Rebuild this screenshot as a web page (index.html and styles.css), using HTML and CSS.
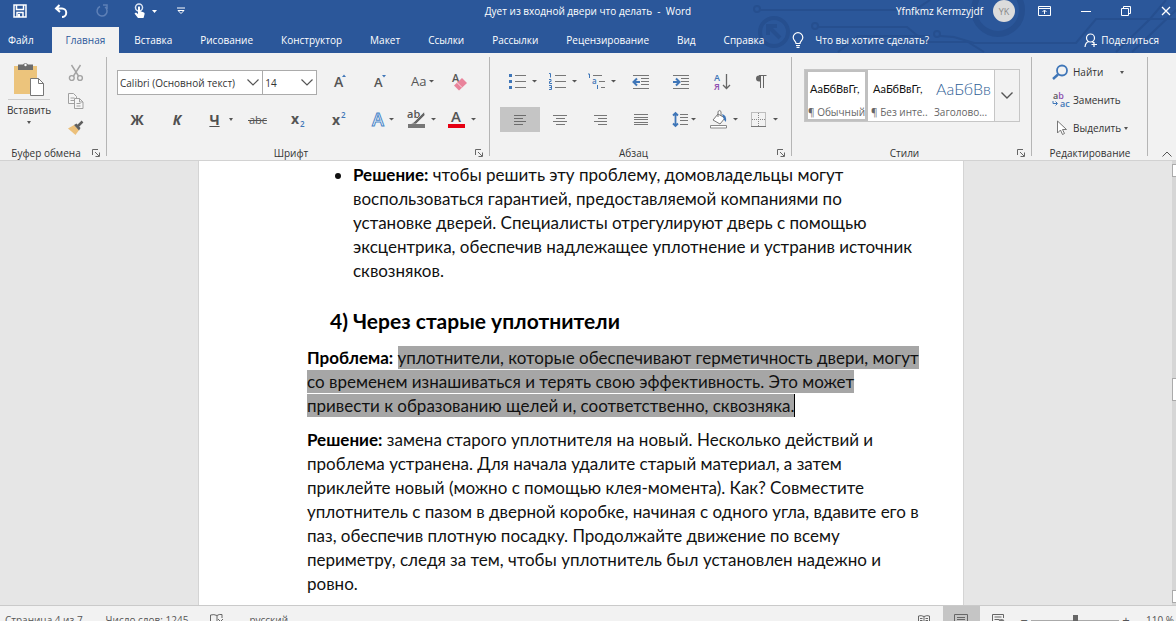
FILE: index.html
```html
<!DOCTYPE html>
<html lang="ru">
<head>
<meta charset="utf-8">
<title>Дует из входной двери что делать - Word</title>
<link rel="stylesheet" href="styles.css">
</head>
<body>
<div class="app">
  <header class="header">
    <svg class="circuit" width="430" height="53" viewBox="746 0 430 53" fill="none" aria-hidden="true">
      <g stroke="#264f8f" stroke-width="2">
        <circle cx="757" cy="9" r="3"/><path d="M760 10H915L930 0"/>
        <circle cx="774" cy="32" r="14" stroke-width="4"/><path d="M780 38l-11-11M768 35v-9h9" stroke-width="4"/>
        <circle cx="815" cy="26" r="3"/><path d="M818 27H907L925 42H968L984 52"/>
        <path d="M838 52L858 36H930"/><circle cx="937" cy="34" r="3"/><path d="M940 36l14 1 20 6H1076L1096 19H1176M1116 52L1150 19 1166 0M1132 52L1176 10"/>
        <circle cx="998" cy="10" r="24" stroke-width="6"/>
      </g>
    </svg>
    <div class="titlebar">
      <div class="quick">
        <button class="qb" aria-label="Сохранить"><svg width="14" height="14" viewBox="0 0 14 14"><path d="M1 1h12v12H1zM3.500 1v4.500h7V1M4 13V8.500h6V13" fill="none" stroke="#fff" stroke-width="1.500"/><path d="M5 10h2v3H5z" fill="#fff"/></svg></button>
        <button class="qb" aria-label="Отменить"><svg width="14" height="14" viewBox="0 0 14 14"><path d="M5.500 1L2 4.500 6 8M2.500 4.500H8a4 4 0 0 1 0 8.500" fill="none" stroke="#fff" stroke-width="2"/></svg></button>
        <button class="qb" aria-label="Повторить"><svg width="14" height="14" viewBox="0 0 14 14"><path d="M5 2.500A5 5 0 1 0 10 3M8 1h4v4" fill="none" stroke="#5e80b7" stroke-width="1.500"/></svg></button>
        <button class="qb touch" aria-label="Режим сенсорного управления"><svg width="26" height="16" viewBox="0 0 26 16"><circle cx="6" cy="4.500" r="3.500" fill="none" stroke="#dce5f3" stroke-width="1.500"/><path d="M5 4q1-1.500 2 0v4l4 1.500q1 .5.500 2L10.500 15H5L1.500 10.500 3 9.500 5 11z" fill="#fff"/><path d="M19 7h5l-2.500 3z" fill="#fff"/></svg></button>
        <button class="qb" aria-label="Настройка панели"><svg width="8" height="8" viewBox="0 0 8 8"><path d="M0 1h8M1 3.500h6L4 6.500z" fill="none" stroke="#fff"/></svg></button>
      </div>
      <h1 class="title">Дует из входной двери что делать&nbsp; -&nbsp; Word</h1>
      <div class="window">
        <span class="user">Yfnfkmz Kermzyjdf</span>
        <button class="avatar">YK</button>
        <button class="wb" aria-label="Параметры ленты"><svg width="13" height="10" viewBox="0 0 13 10"><path d="M.5.500h12v9H.5zM1 2.500h11M6.500 8V4.500M4.500 6l2-2 2 2" fill="none" stroke="#fff"/></svg></button>
        <button class="wb" aria-label="Свернуть"><svg width="10" height="10" viewBox="0 0 10 10"><path d="M0 5.500h10" stroke="#fff"/></svg></button>
        <button class="wb" aria-label="Восстановить"><svg width="10" height="10" viewBox="0 0 10 10"><path d="M.5 2.500h7v7h-7zM2.500 2.500v-2h7v7h-2" fill="none" stroke="#fff"/></svg></button>
        <button class="wb" aria-label="Закрыть"><svg width="10" height="10" viewBox="0 0 10 10"><path d="M1 1l8 8M9 1L1 9" stroke="#fff" stroke-width="1.300"/></svg></button>
      </div>
    </div>
    <nav class="tabs">
      <button class="tab file">Файл</button>
      <button class="tab active">Главная</button>
      <button class="tab">Вставка</button>
      <button class="tab">Рисование</button>
      <button class="tab">Конструктор</button>
      <button class="tab">Макет</button>
      <button class="tab">Ссылки</button>
      <button class="tab">Рассылки</button>
      <button class="tab">Рецензирование</button>
      <button class="tab">Вид</button>
      <button class="tab">Справка</button>
      <button class="tab tell"><svg width="12" height="16" viewBox="0 0 12 16"><path d="M4 11.500C4 9 1.200 8.500 1.200 5.500a4.800 4.800 0 0 1 9.600 0C10.800 8.500 8 9 8 11.500zM4 13.500h4M4.500 15.300h3" fill="none" stroke="#fff" stroke-width="1.200"/></svg>Что вы хотите сделать?</button>
      <button class="tab share"><svg width="14" height="15" viewBox="0 0 14 15"><circle cx="6.500" cy="5" r="4" fill="none" stroke="#fff" stroke-width="1.200"/><path d="M1 14q.5-5 4-5.500M8 8.500l2 1.500M10 9v5M7.500 11.500H13" fill="none" stroke="#fff" stroke-width="1.200"/></svg>Поделиться</button>
    </nav>
  </header>

  <section class="ribbon" aria-label="Главная">
    <div class="group clipboard">
      <div class="clip-body">
        <button class="paste"><svg width="32" height="35" viewBox="0 0 32 35"><path d="M1 4h23v28H1z" fill="#ecc47c"/><path d="M5 2.500h5a3 3 0 0 1 5 0h5V8H5z" fill="#6d6d6d"/><circle cx="12.500" cy="3" r="1.200" fill="#fff"/><path d="M17.500 16.500h8l5 5v12h-13z" fill="#fff" stroke="#777"/><path d="M25.500 16.500v5h5" fill="none" stroke="#777"/></svg><span class="paste-text">Вставить</span><i class="caret"></i></button>
        <div class="clip-tools">
          <button aria-label="Вырезать"><svg width="16" height="16" viewBox="0 0 16 16" fill="none" stroke="#a3a3a3" stroke-width="1.400"><path d="M3.500 0l7 11M12.500 0l-7 11"/><circle cx="3.800" cy="13" r="2.400"/><circle cx="12" cy="13" r="2.400"/></svg></button>
          <button aria-label="Копировать"><svg width="16" height="16" viewBox="0 0 16 16" fill="#f6f6f6" stroke="#a0a0a0"><path d="M.5.500h5l3 3v7h-8zM2.500 5h4M2.500 7.500h4"/><path d="M6.500 5.500h5l3.500 3.500v6.500H6.500zM11.500 5.500V9H15M8.500 10.500h4M8.500 13h4"/></svg></button>
          <button aria-label="Формат по образцу"><svg width="16" height="14" viewBox="0 0 16 14"><path d="M0 7.500L6 4l5 5-3.500 5z" fill="#ecc07a"/><path d="M6 4l2.500-1.500 4 4.500L11 9.500z" fill="#5f5f5f"/><path d="M10 5l4.500-4.500" stroke="#5f5f5f" stroke-width="2.500"/></svg></button>
        </div>
      </div>
      <div class="group-label"><span>Буфер обмена</span><button class="launch" aria-label="Параметры буфера"><svg width="8" height="8" viewBox="0 0 8 8"><path d="M.5 6V.5H6M3 3l4 4M7.500 3.500v4h-4" fill="none" stroke="#666"/></svg></button></div>
    </div>

    <div class="group font">
      <div class="cells">
        <div class="combos">
          <label class="combo family"><select aria-label="Шрифт"><option>Calibri (Основной текст)</option></select><svg width="12" height="7" viewBox="0 0 12 7"><path d="M.5.500L6 6 11.500.500" fill="none" stroke="#555" stroke-width="1.200"/></svg></label>
          <label class="combo size"><select aria-label="Размер шрифта"><option>14</option></select><svg width="12" height="7" viewBox="0 0 12 7"><path d="M.5.500L6 6 11.500.500" fill="none" stroke="#555" stroke-width="1.200"/></svg></label>
        </div>
        <button class="cell" aria-label="Увеличить размер"><svg width="40" height="25" viewBox="0 0 40 25"><text x="17" y="17" class="g14">A</text><path d="M25 7l2-2.500L29 7z" fill="#3f76b8"/></svg></button>
        <button class="cell" aria-label="Уменьшить размер"><svg width="40" height="25" viewBox="0 0 40 25"><text x="17" y="17" class="g13">A</text><path d="M25 5h4l-2 2.500z" fill="#3f76b8"/></svg></button>
        <button class="cell" aria-label="Регистр"><svg width="40" height="25" viewBox="0 0 40 25"><text x="14" y="16" class="g13 thin">Aa</text><path d="M32 10h5l-2.500 2.500z" fill="#555"/></svg></button>
        <button class="cell" aria-label="Очистить форматирование"><svg width="40" height="25" viewBox="0 0 40 25"><text x="15" y="12" class="g11">A</text><path d="M17 15.500L25 8l5 5-8 7.500z" fill="#e9839b"/><path d="M20 12.500l5 5" stroke="#f8dbe1"/></svg></button>

        <button class="cell glyph bold">Ж</button>
        <button class="cell glyph ital">К</button>
        <button class="cell glyph under"><u>Ч</u><i class="caret"></i></button>
        <button class="cell" aria-label="Зачёркнутый"><svg width="40" height="25" viewBox="0 0 40 25"><text x="12" y="17" class="g11 thin">abc</text><path d="M11 13.500h19" stroke="#555"/></svg></button>
        <button class="cell" aria-label="Подстрочный"><svg width="40" height="25" viewBox="0 0 40 25"><text x="14" y="17" class="g14 heavy">x</text><text x="23" y="20" class="g8 blue">2</text></svg></button>
        <button class="cell" aria-label="Надстрочный"><svg width="40" height="25" viewBox="0 0 40 25"><text x="15" y="18" class="g14 heavy">x</text><text x="24" y="11" class="g8 blue">2</text></svg></button>
        <button class="cell" aria-label="Текстовые эффекты"><svg width="40" height="25" viewBox="0 0 40 25"><text x="15" y="19" class="g18 outline">A</text><path d="M32 11h5l-2.500 2.500z" fill="#555"/></svg></button>
        <button class="cell" aria-label="Цвет выделения"><svg width="40" height="25" viewBox="0 0 40 25"><text x="10" y="11" class="g11">ab</text><path d="M27 5L17 15l-3 2h5l9-9z" fill="#666" stroke="#f2f2f2" stroke-width=".6"/><path d="M11 17h17v4H11z" fill="#777"/><path d="M34 11h5l-2.500 2.500z" fill="#555"/></svg></button>
        <button class="cell" aria-label="Цвет текста"><svg width="40" height="25" viewBox="0 0 40 25"><text x="14" y="15" class="g15">A</text><path d="M11 17h17v4H11z" fill="#e60012"/><path d="M34 11h5l-2.500 2.500z" fill="#555"/></svg></button>
      </div>
      <div class="group-label"><span>Шрифт</span><button class="launch" aria-label="Параметры шрифта"><svg width="8" height="8" viewBox="0 0 8 8"><path d="M.5 6V.5H6M3 3l4 4M7.500 3.500v4h-4" fill="none" stroke="#666"/></svg></button></div>
    </div>

    <div class="group para">
      <div class="cells">
        <button class="cell" aria-label="Маркеры"><svg width="40" height="25" viewBox="0 0 40 25"><path d="M9 4h3v3H9zM9 10h3v3H9zM9 16h3v3H9z" fill="#3f76b8"/><path d="M15 5.500h11M15 11.500h11M15 17.500h11" stroke="#777"/><path d="M32 10h5l-2.500 2.500z" fill="#555"/></svg></button>
        <button class="cell" aria-label="Нумерация"><svg width="40" height="25" viewBox="0 0 40 25"><path d="M9 3.500h1.500v4M9 9.500h2v2H9.500v2H12M9 15.500h2.500v4H9M9.500 17.500h2" fill="none" stroke="#3f76b8"/><path d="M15 5.500h11M15 11.500h11M15 17.500h11" stroke="#777"/><path d="M32 10h5l-2.500 2.500z" fill="#555"/></svg></button>
        <button class="cell" aria-label="Многоуровневый список"><svg width="40" height="25" viewBox="0 0 40 25"><path d="M13 5.500h9M19 11.500h6M21 17.500h4" stroke="#777"/><path d="M13.500 5v0M8 4h1.500v4" fill="none" stroke="#3f76b8"/><text x="12" y="14" class="g8 blue">a</text><path d="M17.500 15v4" stroke="#3f76b8"/><path d="M31 10h5l-2.500 2.500z" fill="#555"/></svg></button>
        <button class="cell" aria-label="Уменьшить отступ"><svg width="40" height="25" viewBox="0 0 40 25"><path d="M13 5.500h16M21 8.500h8M21 11.500h8M21 14.500h8M13 18.500h16" stroke="#777"/><path d="M20 12h-6M17 8.500L13.500 12l3.500 3.500" fill="none" stroke="#3f76b8" stroke-width="2"/></svg></button>
        <button class="cell" aria-label="Увеличить отступ"><svg width="40" height="25" viewBox="0 0 40 25"><path d="M13 5.500h16M21 8.500h8M21 11.500h8M21 14.500h8M13 18.500h16" stroke="#777"/><path d="M13 12h6M16 8.500l3.500 3.500-3.500 3.500" fill="none" stroke="#3f76b8" stroke-width="2"/></svg></button>
        <button class="cell" aria-label="Сортировка"><svg width="40" height="25" viewBox="0 0 40 25"><text x="14" y="11" class="g9 blue">А</text><text x="14" y="20" class="g9 violet">Я</text><path d="M26.500 4v14M23 15l3.500 3.500L30 15" fill="none" stroke="#666" stroke-width="1.300"/></svg></button>
        <button class="cell" aria-label="Отобразить все знаки"><svg width="40" height="25" viewBox="0 0 40 25"><path d="M24 5.500h-5a3 3 0 0 0 0 6h1V6" fill="#666"/><path d="M20.500 5v13M23.500 5v13M19 5.500h7.500" stroke="#666"/></svg></button>

        <button class="cell pressed" aria-label="По левому краю"><svg width="40" height="25" viewBox="0 0 40 25"><path d="M14 8.500h12M14 11.500h9M14 14.500h12M14 17.500h9" stroke="#6c6c6c"/></svg></button>
        <button class="cell" aria-label="По центру"><svg width="40" height="25" viewBox="0 0 40 25"><path d="M13 8.500h14M16 11.500h9M13 14.500h14M16 17.500h9" stroke="#777"/></svg></button>
        <button class="cell" aria-label="По правому краю"><svg width="40" height="25" viewBox="0 0 40 25"><path d="M14 8.500h13M18 11.500h9M14 14.500h13M18 17.500h9" stroke="#777"/></svg></button>
        <button class="cell" aria-label="По ширине"><svg width="40" height="25" viewBox="0 0 40 25"><path d="M14 7.500h14M14 10.500h14M14 12.500h14M14 15.500h14M14 17.500h14" stroke="#777"/></svg></button>
        <button class="cell" aria-label="Интервал"><svg width="40" height="25" viewBox="0 0 40 25"><path d="M15.500 6v12M13 8.500L15.500 6 18 8.500M13 16.500l2.500 2.500 2.500-2.500" fill="none" stroke="#3f76b8" stroke-width="1.800"/><path d="M20 7.500h8M20 10.500h8M20 13.500h8M20 17.500h8" stroke="#777"/><path d="M31 11h5l-2.500 2.500z" fill="#555"/></svg></button>
        <button class="cell" aria-label="Заливка"><svg width="40" height="25" viewBox="0 0 40 25"><path d="M18 7l7 4-5 6-7-4zM18 10V4.500q2-2 3 0V9" fill="#fff" stroke="#777"/><path d="M22 7q5 1 4 8-2-1-3-5z" fill="#3f76b8"/><path d="M10.500 18.500h16v2.500h-16z" fill="#fff" stroke="#888"/><path d="M33 11h5l-2.500 2.500z" fill="#555"/></svg></button>
        <button class="cell" aria-label="Границы"><svg width="40" height="25" viewBox="0 0 40 25"><path d="M11.500 5.500h14v14h-14zM18.500 6v13M12 12.500h13" fill="none" stroke="#888" stroke-dasharray="1 1"/><path d="M11 19.500h15" stroke="#777"/><path d="M33 11h5l-2.500 2.500z" fill="#555"/></svg></button>
      </div>
      <div class="group-label"><span>Абзац</span><button class="launch" aria-label="Параметры абзаца"><svg width="8" height="8" viewBox="0 0 8 8"><path d="M.5 6V.5H6M3 3l4 4M7.500 3.500v4h-4" fill="none" stroke="#666"/></svg></button></div>
    </div>

    <div class="group styles">
      <div class="gallery">
        <button class="style chosen"><span class="sample">АаБбВвГг,</span><span class="name">¶ Обычный</span></button>
        <button class="style"><span class="sample">АаБбВвГг,</span><span class="name">¶ Без инте...</span></button>
        <button class="style"><span class="sample heading">АаБбВв</span><span class="name">Заголово...</span></button>
        <button class="more" aria-label="Другие стили"><svg width="12" height="7" viewBox="0 0 12 7"><path d="M.5.500L6 6 11.500.500" fill="none" stroke="#555" stroke-width="1.400"/></svg></button>
      </div>
      <div class="group-label"><span>Стили</span><button class="launch" aria-label="Параметры стилей"><svg width="8" height="8" viewBox="0 0 8 8"><path d="M.5 6V.5H6M3 3l4 4M7.500 3.500v4h-4" fill="none" stroke="#666"/></svg></button></div>
    </div>

    <div class="group editing">
      <div class="edit-list">
        <button><svg width="18" height="16" viewBox="0 0 18 16"><circle cx="10" cy="6.500" r="5" fill="none" stroke="#3f76b8" stroke-width="1.800"/><path d="M6 10.500L1 15" stroke="#3f76b8" stroke-width="2.400"/></svg><span>Найти</span><i class="caret far"></i></button>
        <button><svg width="18" height="16" viewBox="0 0 18 16"><text x="1" y="7" class="g9">a<tspan class="violet">b</tspan></text><path d="M1 9v2.500h4M3.500 9.500l2 2-2 2" fill="none" stroke="#3f76b8"/><text x="8" y="15" class="g9 blue">ac</text></svg><span>Заменить</span></button>
        <button><svg width="18" height="16" viewBox="0 0 18 16"><path d="M5.500 1v12l3-3 2 4.500 2-1-2-4h4z" fill="#fff" stroke="#777"/></svg><span>Выделить</span><i class="caret"></i></button>
      </div>
      <div class="group-label"><span>Редактирование</span></div>
    </div>
    <button class="collapse" aria-label="Свернуть ленту"><svg width="10" height="6" viewBox="0 0 10 6"><path d="M.5 5.500L5 1l4.500 4.500" fill="none" stroke="#555"/></svg></button>
  </section>

  <main class="workspace">
    <article class="paper">
      <ul class="list"><li><b>Решение:</b> чтобы решить эту проблему, домовладельцы могут<br>воспользоваться гарантией, предоставляемой компаниями по<br>установке дверей. Специалисты отрегулируют дверь с помощью<br>эксцентрика, обеспечив надлежащее уплотнение и устранив источник<br>сквозняков.</li></ul>
      <h2><span class="num">4)</span>Через старые уплотнители</h2>
      <p><b>Проблема:</b> <mark>уплотнители, которые обеспечивают герметичность двери, могут<br>со временем изнашиваться и терять свою эффективность. Это может<br>привести к образованию щелей и, соответственно, сквозняка.</mark></p>
      <p><b>Решение:</b> замена старого уплотнителя на новый. Несколько действий и<br>проблема устранена. Для начала удалите старый материал, а затем<br>приклейте новый (можно с помощью клея-момента). Как? Совместите<br>уплотнитель с пазом в дверной коробке, начиная с одного угла, вдавите его в<br>паз, обеспечив плотную посадку. Продолжайте движение по всему<br>периметру, следя за тем, чтобы уплотнитель был установлен надежно и<br>ровно.</p>
    </article>
    <div class="scroll" aria-hidden="true"><i class="up"></i><i class="thumb"></i><i class="down"></i></div>
  </main>

  <footer class="status">
    <div class="status-row">
      <span class="pages">Страница 4 из 7</span>
      <span class="words">Число слов: 1245</span>
      <svg class="proof" width="14" height="12" viewBox="0 0 14 12"><path d="M7 1.500Q4 0 .5 1v10q3.500-1 6.500 0zM7 1.500Q9 0 12 .5V4M8 5l5 5M13 5l-5 5" fill="none" stroke="#666"/></svg>
      <span>русский</span>
      <div class="views">
        <button aria-label="Режим чтения"><svg width="12" height="11" viewBox="0 0 12 11"><path d="M6 1.500Q3 0 .5 1v9q2.500-1 5.500 0 3-1 5.500 0V1Q9 0 6 1.500zV10M2 3.500h2.500M2 5.500h2.500M7.500 3.500H10M7.500 5.500H10" fill="none" stroke="#666"/></svg></button>
        <button class="on" aria-label="Разметка страницы"><svg width="14" height="12" viewBox="0 0 14 12"><path d="M.5.500h13v11H.5zM3 3.500h8M3 5.500h8M3 7.500h8" fill="none" stroke="#666"/></svg></button>
        <button aria-label="Веб-документ"><svg width="13" height="12" viewBox="0 0 13 12"><path d="M11.500 4V.5H.5v10H6M2.500 3h7M2.500 5.500h5" fill="none" stroke="#666"/><circle cx="9.500" cy="8" r="3" fill="#777"/></svg></button>
      </div>
      <button class="zb">−</button>
      <input class="zoom" type="range" min="0" max="100" value="51" aria-label="Масштаб">
      <button class="zb">+</button>
      <span class="pct">110 %</span>
    </div>
  </footer>
</div>
</body>
</html>
```
FILE: styles.css
```css
* { box-sizing: border-box; }
body { margin: 0; overflow: hidden; font-family: "Open Sans", "Noto Sans", sans-serif; font-size: 10px; color: #333; }
button { margin: 0; padding: 0; border: 0; background: none; font: inherit; color: inherit; white-space: nowrap; }
svg { display: block; flex: none; overflow: visible; }

.app { display: grid; grid-template-rows: auto auto 1fr 16px; height: 100vh; }

.header { position: relative; background: #2b579a; color: #fff; }
.circuit { position: absolute; right: 0; top: 0; overflow: hidden; }
.titlebar { position: relative; display: grid; grid-template-columns: 1fr auto 1fr; align-items: center; height: 27px; padding-bottom: 5px; }
.quick { display: flex; align-items: center; gap: 27px; padding-left: 13px; }
.quick .touch { margin: 0 -9px 0 -3px; }
.title { margin: 0; font-size: 10px; font-weight: 400; }
.window { display: flex; align-items: center; justify-content: flex-end; padding-right: 5px; }
.avatar { width: 22px; height: 22px; margin: 0 23px 0 10px; border-radius: 50%; background: #dcdcdc; color: #888; font-size: 9px; }
.wb { margin-left: 30px; }
.avatar + .wb { margin-left: 0; }

.tabs { position: relative; display: flex; height: 26px; font-weight: 500; }
.tab { padding: 0 14px; }
.tab.file { padding: 0 18px 0 8px; }
.tab.active { margin-right: 1px; background: #f2f2f2; color: #2b579a; }
.tell, .share { display: flex; align-items: center; }
.tell { gap: 11px; }
.share { gap: 3px; margin-left: auto; padding-right: 17px; }

.ribbon { display: flex; height: 108px; padding-top: 4px; background: #f2f2f2; border-bottom: 1px solid #d2d2d2; }
.group { display: flex; flex-direction: column; flex: none; background: linear-gradient(#b5b5b5, #b5b5b5) right top / 1px calc(100% - 4px) no-repeat; }
.group-label { display: flex; align-items: center; height: 14px; margin-top: auto; color: #333; font-weight: 500; }
.group-label span { flex: 1; text-align: center; }
.launch { margin-right: 7px; }
.caret { display: inline-block; border: 2px solid transparent; border-top: 3px solid #555; border-bottom: 0; }

.clipboard { width: 107px; }
.clip-body { display: flex; gap: 10px; padding-top: 5px; }
.paste { display: flex; flex-direction: column; align-items: center; width: 58px; }
.paste-text { width: 42px; margin-top: 2px; padding-top: 3px; border-top: 1px solid #ccc; font-weight: 500; display: flex; justify-content: center; }
.paste .caret { margin-top: 4px; }
.clip-tools { display: flex; flex-direction: column; gap: 12px; padding-top: 3px; }

.cells { display: grid; grid-auto-rows: 25px; row-gap: 12px; padding: 13px 10px 0; }
.font { width: 383px; }
.font .cells { grid-template-columns: repeat(9, 40px); }
.para { width: 302px; }
.para .cells { grid-template-columns: repeat(7, 40px); }
.combos { display: flex; grid-column: span 5; }
.combo { position: relative; height: 25px; border: 1px solid #ababab; background: #fff; }
.combo select { width: 100%; height: 100%; padding: 0 2px; border: 0; background: none; appearance: none; font: inherit; color: #333; }
.combo svg { position: absolute; right: 3px; top: 8px; pointer-events: none; }
.family { width: 147px; }
.size { width: 55px; margin-left: -1px; }
.pressed { background: #c5c5c5; }
.glyph { font-size: 14px; font-weight: 700; color: #505050; }
.ital { font-style: italic; }
.under { display: flex; align-items: center; justify-content: center; gap: 9px; padding-left: 8px; }

text { font-family: "Open Sans", sans-serif; font-weight: 600; fill: #555; }
.thin { font-weight: 400; }
.heavy { font-weight: 700; }
.g8 { font-size: 8px; }
.g9 { font-size: 9px; }
.g11 { font-size: 11px; }
.g13 { font-size: 13px; }
.g14 { font-size: 14px; }
.g15 { font-size: 15px; }
.g18 { font-size: 18px; }
.blue { fill: #3f76b8; }
.violet { fill: #8e4fb0; }
.outline { fill: #fff; stroke: #4a86c8; stroke-width: 1; }

.styles { width: 240px; }
.gallery { display: flex; height: 53px; margin: 12px 12px 0; border: 1px solid #c6c6c6; background: #fff; }
.style { display: grid; grid-template-rows: 1fr auto; align-items: center; width: 63px; overflow: hidden; border: 3px solid transparent; border-width: 2px 3px; text-align: left; color: #666; }
.chosen { border-color: #c0c0c0; }
.sample { overflow: hidden; padding-left: 2px; font-family: Lato, sans-serif; font-size: 11px; line-height: 20px; color: #111; }
.sample.heading { font-size: 16px; font-weight: 300; color: #2e6095; }
.more { display: flex; align-items: center; justify-content: center; flex: 1; border-left: 1px solid #c6c6c6; background: #f2f2f2; }

.editing { width: 116px; }
.edit-list { display: flex; flex-direction: column; gap: 12px; padding: 7px 0 0 20px; }
.edit-list button { display: flex; align-items: center; gap: 3px; height: 16px; font-weight: 500; }
.edit-list .far { margin-left: 14px; }
.collapse { align-self: flex-end; margin: 0 4px 3px auto; }

.workspace { display: flex; min-height: 0; overflow: hidden; background: #e6e6e6; }
.paper { width: 766px; margin: 0 auto; padding: 2px 0 0 108px; border: 1px solid #d4d4d4; border-width: 0 1px; background: #fff; color: #111; font: 17px/24px Lato, sans-serif; white-space: nowrap; }
.list { margin: 0; padding-left: 46px; }
.paper h2 { display: flex; margin: 24px 0 11px 23px; font-size: 21px; line-height: 28px; color: #000; }
.num { width: 23px; }
.paper p { margin: 0 0 10px; }
.paper b { color: #000; }
.paper mark { padding: 1px 0; background: #a6a6a6; color: #111; border-right: 1px solid #000; }
.scroll { display: flex; flex-direction: column; justify-content: space-between; width: 4px; margin-left: 10px; padding: 3px 0 2px; background: #d6d6d6; }
.scroll i { border: 1px solid #aaa; border-right: 0; background: #fff; height: 13px; }
.scroll .thumb { height: 23px; margin-top: 12px; }

.status { overflow: hidden; background: #f2f2f2; border-top: 1px solid #cacaca; color: #555; }
.status-row { display: flex; align-items: center; height: 28px; padding-left: 5px; }
.words { margin-left: 23px; }
.proof { margin: 0 25px 0 22px; }
.views { display: flex; align-self: stretch; margin-left: auto; }
.views button { display: grid; place-items: center; width: 37px; }
.views .on { background: #c5c5c5; }
.zb { width: 14px; font-size: 13px; }
.zoom { appearance: none; width: 88px; height: 12px; margin: 0; background: linear-gradient(#aaa, #aaa) center / 100% 1px no-repeat; }
.zoom::-webkit-slider-thumb { appearance: none; width: 5px; height: 11px; background: #666; }
.pct { margin: 0 2px 0 13px; }
```
